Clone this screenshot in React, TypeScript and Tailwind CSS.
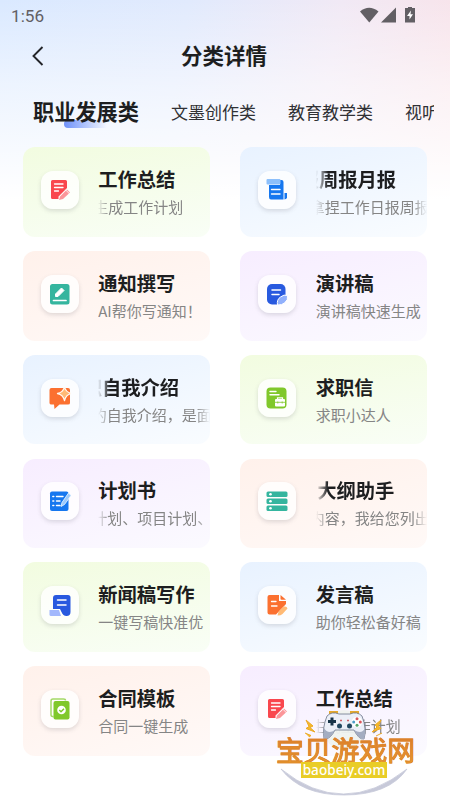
import type { ReactNode } from 'react';

const Plate = ({ children }: { children: ReactNode }) => (
  <div className="ml-[18px] flex size-[38px] shrink-0 items-center justify-center rounded-[12px] bg-white/80 shadow-[0_2px_4px_rgba(80,80,90,0.18)] mt-[-4px]">
    <svg width="22" height="22" viewBox="0 0 22 22">{children}</svg>
  </div>
);

const Summary = () => (
  <Plate>
    <path d="M2 2.5Q2 1 3.500 1H16.500Q18 1 18 2.500V9L9.500 17.500V20H3.500Q2 20 2 18.500Z" fill="#f9474e" />
    <path d="M5.500 5H14M5.500 8.500H14M5.500 12H9.500" stroke="#fff" strokeWidth="1.300" strokeLinecap="round" />
    <path d="M10 21L11 17.500L18 10.500L21 13.500L14 20Z" fill="#fb9599" />
    <path d="M16.500 10.800L20.700 15" stroke="#fff" strokeWidth=".8" />
  </Plate>
);
const Report = () => (
  <Plate>
    <path d="M3 6H14V1H15.500Q17.500 1 17.500 3V20.500H5Q3 20.500 3 18Z" fill="#1677ef" />
    <rect x=".5" y="0" width="14" height="5.500" rx="1" fill="#8dc0fb" />
    <path d="M5.500 10.500H14M5.500 15H14" stroke="#fff" strokeWidth="1.400" strokeLinecap="round" />
    <path d="M18.500 14H21V18.500Q21 20 18.500 20.500Z" fill="#1677ef" />
  </Plate>
);
const Notice = () => (
  <Plate>
    <rect x="1" y="1" width="19.500" height="20.500" rx="2.500" fill="#35b59e" />
    <path d="M6.500 11L12.500 5L15 7.500L9 13.500H6.500Z" fill="#fff" stroke="#fff" strokeWidth="1" strokeLinejoin="round" />
    <path d="M4.500 17.500H17" stroke="#fff" strokeWidth="1.700" strokeLinecap="round" />
  </Plate>
);
const Speech = () => (
  <Plate>
    <rect x="1" y="1" width="18.500" height="20.500" rx="5" fill="#2859df" />
    <path d="M6 7H14.500M6 11.500H13" stroke="#fff" strokeWidth="1.500" strokeLinecap="round" />
    <path d="M11.500 22Q10.500 16.500 14.500 14Q18 11 21.500 12.500Q22.500 17 18.500 20Q16 22 11.500 22Z" fill="#91b0fc" stroke="#fff" strokeWidth="1" />
  </Plate>
);
const Intro = () => (
  <Plate>
    <path d="M.5 3Q.5 1 2.500 1H19Q21 1 21 3V16Q21 17.500 19 17.500H10.500L5.500 22L5 17.500H2.500Q.5 17.500 .5 16Z" fill="#fb7030" />
    <path d="M15.500 0Q17 5.500 22 6.500Q17 7.500 15.500 13.500Q14 7.500 8.500 6.500Q14 5.500 15.500 0Z" fill="#ffba75" stroke="#fff7ef" strokeWidth="1.300" strokeLinejoin="round" />
    <path d="M15.500 2.500L18 5L20.500 6.500L17.500 8L15.500 11L13.500 8L10.500 6.500L13.500 5Z" fill="#ffba75" />
  </Plate>
);
const Job = () => (
  <Plate>
    <rect x=".5" y=".5" width="20" height="21" rx="4" fill="#80c82b" />
    <path d="M4 4.500H10M4 7.800H13" stroke="#fff" strokeWidth="1.400" strokeLinecap="round" />
    <path d="M11.500 12V10.800H16.500V12" fill="none" stroke="#fff" strokeWidth="1.200" />
    <rect x="9" y="12" width="10" height="7.500" rx="1" fill="#fff" />
    <path d="M9 15.300H19M11.800 14.500V16.500M16.200 14.500V16.500" stroke="#80c82b" strokeWidth=".8" />
  </Plate>
);
const Plan = () => (
  <Plate>
    <rect x="1" y="1.500" width="18.500" height="19.500" rx="2" fill="#1677ef" />
    <path d="M3.800 6.500H4.800M7.500 6.500H14M3.800 11H4.800M7.500 11H11M3.800 15.500H4.800M7.500 15.500H11" stroke="#fff" strokeWidth="1.400" strokeLinecap="round" />
    <path d="M12 16.500L13 12.500L19.500 3L22 5.500L15.500 14.500Z" fill="#9bc9fc" stroke="#eef7ff" strokeWidth=".8" />
  </Plate>
);
const Outline = () => (
  <Plate>
    <rect x=".5" y="1.500" width="21" height="5.500" rx="1.500" fill="#35b59e" />
    <rect x=".5" y="8.500" width="21" height="5.500" rx="1.500" fill="#35b59e" />
    <rect x=".5" y="15.500" width="21" height="5.500" rx="1.500" fill="#35b59e" />
    <circle cx="4.500" cy="4.200" r="1.300" fill="#fff" />
    <circle cx="4.500" cy="11.200" r="1.300" fill="#fff" />
    <circle cx="4.500" cy="18.200" r="1.300" fill="#fff" />
  </Plate>
);
const News = () => (
  <Plate>
    <path d="M4 4Q4 1 7 1H19Q21.500 1 21.500 3.500V18Q21.500 22 17.500 22Q14 22 12.500 18L11 15H4Z" fill="#2859df" />
    <path d="M8.500 6H17M8.500 11H17" stroke="#fff" strokeWidth="1.500" strokeLinecap="round" />
    <path d="M.5 16H10L12 22H2Q.5 22 .5 20.500Z" fill="#a2b8fc" />
  </Plate>
);
const Talk = () => (
  <Plate>
    <path d="M1.500 3Q1.500 1 3.500 1H13V7H20V10L10 20.500H3.500Q1.500 20.500 1.500 18.500Z" fill="#fb7030" />
    <path d="M14.500 1L20 5.800H15.500Q14.500 5.800 14.500 5Z" fill="#fb7030" />
    <path d="M5.500 7.500H10M5.500 12H11" stroke="#fff" strokeWidth="1.300" strokeLinecap="round" />
    <path d="M11.500 21.500Q11.500 18 14 16L18 12.500Q21 12 21.500 14.500L16.500 20Q15 21.500 11.500 21.500Z" fill="#ffba75" />
  </Plate>
);
const Contract = () => (
  <Plate>
    <path d="M4.500 18.500H3.500Q2 18.500 2 16.500V3Q2 1 4 1H14.500Q16.500 1 16.500 2.500" fill="none" stroke="#a4d967" strokeWidth="1.500" />
    <rect x="4.500" y="3" width="16" height="18.500" rx="2" fill="#80c82b" />
    <circle cx="12.500" cy="12" r="4.300" fill="#fff" />
    <path d="M10.300 12L12 13.700L15 10.700" fill="none" stroke="#80c82b" strokeWidth="1.500" />
  </Plate>
);

type Item = {
  title: string;
  sub: string;
  icon: ReactNode;
  tone: string;
  titleShift?: string;
  subShift?: string;
};

const green = 'bg-linear-[170deg,#f2fce0,#f9fef6]';
const blue = 'bg-linear-[165deg,#e8f2ff,#f9fcff]';
const pink = 'bg-linear-[165deg,#fff1eb,#fff9f7]';
const violet = 'bg-linear-[165deg,#f7edff,#fbfaff]';

const items: Item[] = [
  { title: '工作总结', sub: '生成工作计划', icon: <Summary />, tone: green, subShift: 'ml-[-5px]' },
  { title: '报周报月报', sub: '拿捏工作日报周报', icon: <Report />, tone: blue, titleShift: 'ml-[-16px]', subShift: 'ml-[-6px]' },
  { title: '通知撰写', sub: 'AI帮你写通知！', icon: <Notice />, tone: pink },
  { title: '演讲稿', sub: '演讲稿快速生成', icon: <Speech />, tone: violet },
  { title: '职自我介绍', sub: '的自我介绍，是面试', icon: <Intro />, tone: blue, titleShift: 'ml-[-15.500px]', subShift: 'ml-[-6.500px]' },
  { title: '求职信', sub: '求职小达人', icon: <Job />, tone: green },
  { title: '计划书', sub: '计划、项目计划、', icon: <Plan />, tone: violet, subShift: 'ml-[-6px]' },
  { title: '大纲助手', sub: '内容，我给您列出', icon: <Outline />, tone: pink, titleShift: 'ml-[1.500px]', subShift: 'ml-[-6px]' },
  { title: '新闻稿写作', sub: '一键写稿快准优', icon: <News />, tone: green },
  { title: '发言稿', sub: '助你轻松备好稿', icon: <Talk />, tone: blue },
  { title: '合同模板', sub: '合同一键生成', icon: <Contract />, tone: pink },
  { title: '工作总结', sub: '生成工作计划', icon: <Summary />, tone: violet, subShift: 'ml-[-5px]' },
];

const bothEdges = '[mask-image:linear-gradient(90deg,transparent,#000_11px,#000_calc(100%-14px),transparent)]';
const leftEdge = '[mask-image:linear-gradient(90deg,transparent,#000_12px)]';

const Card = ({ item }: { item: Item }) => (
  <div className={`flex h-[89.500px] items-center overflow-hidden rounded-[12px] ${item.tone}`}>
    {item.icon}
    <div className="mt-[2px] ml-[19.500px] min-w-0 flex-1 whitespace-nowrap">
      <div className={`overflow-hidden text-[19.300px] leading-[28px] font-bold text-[#1d1e20] ${item.titleShift ? leftEdge : ''}`}>
        <div className={item.titleShift ?? ''}>{item.title}</div>
      </div>
      <div className={`overflow-hidden text-[15px] leading-[28px] text-[#858585] ${item.subShift ? bothEdges : ''}`}>
        <div className={item.subShift ?? ''}>{item.sub}</div>
      </div>
    </div>
  </div>
);

const Watermark = () => (
  <div className="absolute top-[705px] left-[270px] h-[95px] w-[150px]">
    <svg className="absolute inset-0" width="150" height="95" viewBox="0 0 150 95">
      <path d="M11 64Q73 114 137 64Q119 90 74 90Q31 90 11 64Z" fill="#c7c9d9" stroke="#c7c9d9" strokeWidth=".8" />
      <circle cx="74" cy="25" r="20" fill="#eff2ef" opacity=".95" />
      <path d="M60 10V8H67V10M81 10V8H88V10" transform="translate(0 -1)" fill="none" stroke="#e5a92d" strokeWidth="2" />
      <path d="M57 11Q62 6 69 9H80Q87 6 92 11Q97 24 94 34Q89 35 84 25H65Q60 35 54 34Q52 23 57 11Z" fill="#eceff8" stroke="#6b7488" strokeWidth=".8" />
      <path d="M84 25Q89 35 94 34Q95.500 29 95 23Q92 30 84 25ZM65 25Q60 35 54 34Q53 29 54 23Q58 30 65 25Z" fill="#a4adc1" />
      <path d="M62 12.500V20.500M58 16.500H66" stroke="#183449" strokeWidth="3" />
      <circle cx="69.500" cy="21" r="2.500" fill="#234861" />
      <circle cx="79.500" cy="21" r="2.500" fill="#234861" />
      <circle cx="87" cy="17" r="5.300" fill="#fff" />
      <circle cx="87" cy="13.700" r="1.500" fill="#da5a61" />
      <circle cx="87" cy="20.300" r="1.500" fill="#56a56c" />
      <circle cx="83.700" cy="17" r="1.500" fill="#4c9cc9" />
      <circle cx="90.300" cy="17" r="1.500" fill="#dd555b" />
      <path d="M70 15.500H72M77 15.500H79" stroke="#d1636c" strokeWidth="1.500" />
      <path d="M36 15L43 21L40 22.500L45 27L36 23.500L39 21.500ZM35 28L41 30.500L39 32M111 15L105 20L107 22L102 27L111 23.500L108.500 21ZM112 28L106 31" fill="#f5ba2c" stroke="#eca926" strokeWidth="1" />
    </svg>
    <div className="relative mt-[26px] ml-[6px] flex flex-col items-start">
      <span className="bg-linear-to-b from-[#db752a] to-[#eba02b] bg-clip-text text-[27.800px] leading-[36px] font-normal whitespace-nowrap text-transparent [-webkit-text-stroke:0.800px_#dc842c]">宝贝游戏网</span>
      <span className="mt-[-5px] ml-[25px] flex h-[16px] w-[86px] items-center justify-center bg-[#e9cd27] font-['Noto_Sans','Noto_Sans_CJK_SC',sans-serif] text-[13.600px] leading-[16px] font-medium text-white">baobeiy.com</span>
    </div>
  </div>
);

export default function App() {
  return (
    <main className="relative h-[800px] w-[450px] overflow-hidden bg-white bg-[linear-gradient(180deg,transparent_0,rgba(255,255,255,.5)_85px,#fff_200px),linear-gradient(100deg,#dae9ff_0%,#e1eafd_32%,#f1e9f5_58%,#fbe1e5_88%,#fbe1e5_100%)] font-['Noto_Sans_CJK_SC',sans-serif]">
      <header className="flex h-[32px] items-center justify-between pr-[35px] pl-[11px] text-[#625f64]">
        <span className="font-['Roboto',sans-serif] text-[17.200px] leading-[32px]">1:56</span>
        <svg width="56" height="18" viewBox="0 0 56 18" fill="#625f64">
          <path d="M1 4.500Q10-3 19.500 4.500L10.300 15.500Z" />
          <path d="M37 .5V15.500H22Z" />
          <path d="M49 -.5H53V1H56V15.500H46V1H49Z" />
          <path d="M52 3.500L48 9H50.500V12.500L54 7.300H51.500Z" fill="#fff" />
        </svg>
      </header>
      <nav className="grid h-[48px] grid-cols-[1fr_auto_1fr] items-center">
        <svg className="ml-[32px]" width="12" height="20" viewBox="0 0 12 20" fill="none" stroke="#242529" strokeWidth="1.900">
          <path d="M10.500 1L1.500 10L10.500 19" />
        </svg>
        <h1 className="-mt-[2px] -ml-[2px] text-[21.500px] leading-[32px] font-bold text-[#1d1e20]">分类详情</h1>
      </nav>
      <div className="ml-[33px] flex h-[64px] w-[400.500px] items-center overflow-hidden whitespace-nowrap text-[17px] text-[#303135]">
        <div className="relative -mt-[2px] mr-[32px] shrink-0 text-[21.200px] leading-[32px] font-bold text-[#1d1e20]">
          <span className="absolute top-[25px] left-[31px] h-[8px] w-[43px] rounded-l-full bg-linear-to-r from-[#6e91fa] to-transparent" />
          <span className="relative">职业发展类</span>
        </div>
        <span className="mr-[32px] shrink-0">文墨创作类</span>
        <span className="mr-[32px] shrink-0">教育教学类</span>
        <span className="shrink-0">视听</span>
      </div>
      <section className="grid grid-cols-[187px_187px] gap-x-[30.500px] gap-y-[14.300px] pt-[3.300px] pl-[22.700px]">
        {items.map((item, index) => <Card key={index} item={item} />)}
      </section>
      <Watermark />
    </main>
  );
}
